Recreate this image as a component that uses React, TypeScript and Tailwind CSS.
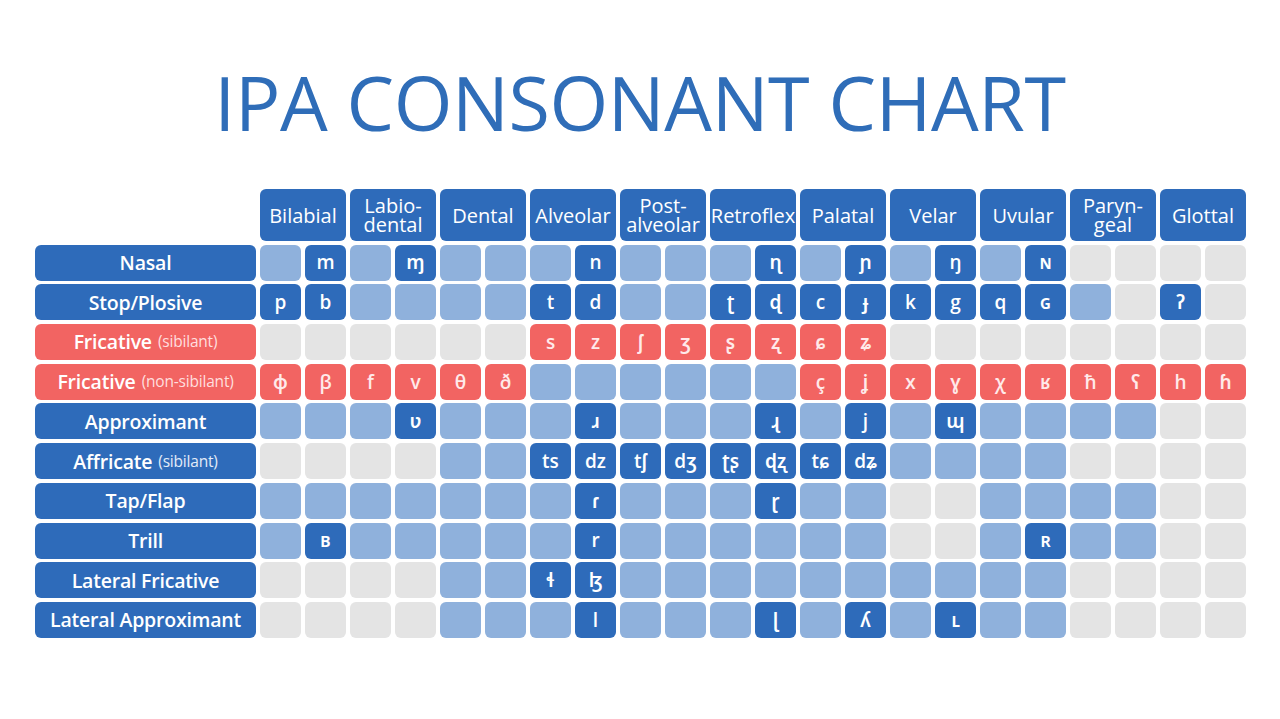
import React from 'react';

type Kind = 'L' | 'G' | 'D' | 'R';
type Cell = { k: Kind; s?: string };

const places: string[][] = [
  ['Bilabial'],
  ['Labio-', 'dental'],
  ['Dental'],
  ['Alveolar'],
  ['Post-', 'alveolar'],
  ['Retroflex'],
  ['Palatal'],
  ['Velar'],
  ['Uvular'],
  ['Paryn-', 'geal'],
  ['Glottal'],
];

const L: Cell = { k: 'L' };
const G: Cell = { k: 'G' };
const d = (s: string): Cell => ({ k: 'D', s });
const r = (s: string): Cell => ({ k: 'R', s });

interface Row {
  label: string;
  note?: string;
  red?: boolean;
  cells: Cell[];
}

const rows: Row[] = [
  {
    label: 'Nasal',
    cells: [L, d('m'), L, d('ɱ'), L, L, L, d('n'), L, L, L, d('ɳ'), L, d('ɲ'), L, d('ŋ'), L, d('ɴ'), G, G, G, G],
  },
  {
    label: 'Stop/Plosive',
    cells: [d('p'), d('b'), L, L, L, L, d('t'), d('d'), L, L, d('ʈ'), d('ɖ'), d('c'), d('ɟ'), d('k'), d('g'), d('q'), d('ɢ'), L, G, d('ʔ'), G],
  },
  {
    label: 'Fricative',
    note: '(sibilant)',
    red: true,
    cells: [G, G, G, G, G, G, r('s'), r('z'), r('ʃ'), r('ʒ'), r('ʂ'), r('ʐ'), r('ɕ'), r('ʑ'), G, G, G, G, G, G, G, G],
  },
  {
    label: 'Fricative',
    note: '(non-sibilant)',
    red: true,
    cells: [r('ɸ'), r('β'), r('f'), r('v'), r('θ'), r('ð'), L, L, L, L, L, L, r('ç'), r('ʝ'), r('x'), r('ɣ'), r('χ'), r('ʁ'), r('ħ'), r('ʕ'), r('h'), r('ɦ')],
  },
  {
    label: 'Approximant',
    cells: [L, L, L, d('ʋ'), L, L, L, d('ɹ'), L, L, L, d('ɻ'), L, d('j'), L, d('ɰ'), L, L, L, L, G, G],
  },
  {
    label: 'Affricate',
    note: '(sibilant)',
    cells: [G, G, G, G, L, L, d('ts'), d('dz'), d('tʃ'), d('dʒ'), d('ʈʂ'), d('ɖʐ'), d('tɕ'), d('dʑ'), L, L, L, L, G, G, G, G],
  },
  {
    label: 'Tap/Flap',
    cells: [L, L, L, L, L, L, L, d('ɾ'), L, L, L, d('ɽ'), L, L, G, G, L, L, L, L, G, G],
  },
  {
    label: 'Trill',
    cells: [L, d('ʙ'), L, L, L, L, L, d('r'), L, L, L, L, L, L, G, G, L, d('ʀ'), L, L, G, G],
  },
  {
    label: 'Lateral Fricative',
    cells: [G, G, G, G, L, L, d('ɬ'), d('ɮ'), L, L, L, L, L, L, L, L, L, L, G, G, G, G],
  },
  {
    label: 'Lateral Approximant',
    cells: [G, G, G, G, L, L, L, d('l'), L, L, L, d('ɭ'), L, d('ʎ'), L, d('ʟ'), L, L, G, G, G, G],
  },
];

const cellClass: Record<Kind, string> = {
  L: 'bg-[#8fb1dc]',
  G: 'bg-[#e4e4e4]',
  D: 'bg-[#2e6bba] text-white',
  R: 'bg-[#f26462] text-[#ffeaea]',
};

export default function App() {
  return (
    <div
      className="w-[1280px] h-[719px] bg-white overflow-hidden"
      style={{ fontFamily: '"Open Sans", "Noto Sans", "DejaVu Sans", sans-serif' }}
    >
      <h1 className="pt-[56px] text-center text-[75.5px] leading-[92px] tracking-[-0.4px] text-[#2f6db8] font-normal">
        IPA CONSONANT CHART
      </h1>

      <div className="mt-[41px] ml-[35px] grid grid-cols-[221px_repeat(22,41px)] gap-x-[4px] gap-y-[3.7px]">
        <div className="h-[52px]" />
        {places.map((p) => (
          <div
            key={p.join('')}
            className="col-span-2 h-[52px] rounded-md bg-[#2e6bba] text-white flex flex-col items-center justify-center text-[20px] leading-[19px]"
          >
            {p.map((line) => (
              <span key={line}>{line}</span>
            ))}
          </div>
        ))}

        {rows.map((row, i) => (
          <React.Fragment key={i}>
            <div
              className={`h-[36px] rounded-md flex items-center justify-center text-white text-[19.5px] font-semibold tracking-[-0.2px] ${
                row.red ? 'bg-[#f26462]' : 'bg-[#2e6bba]'
              }`}
            >
              {row.label}
              {row.note && (
                <span className={`ml-[6px] text-[15.5px] font-normal ${row.red ? 'text-[#ffdede]' : 'text-[#e3ecf8]'}`}>
                  {row.note}
                </span>
              )}
            </div>
            {row.cells.map((c, j) => (
              <div
                key={j}
                className={`h-[36px] rounded-md flex items-center justify-center text-[19px] font-semibold ${cellClass[c.k]}`}
              >
                {c.s}
              </div>
            ))}
          </React.Fragment>
        ))}
      </div>
    </div>
  );
}
